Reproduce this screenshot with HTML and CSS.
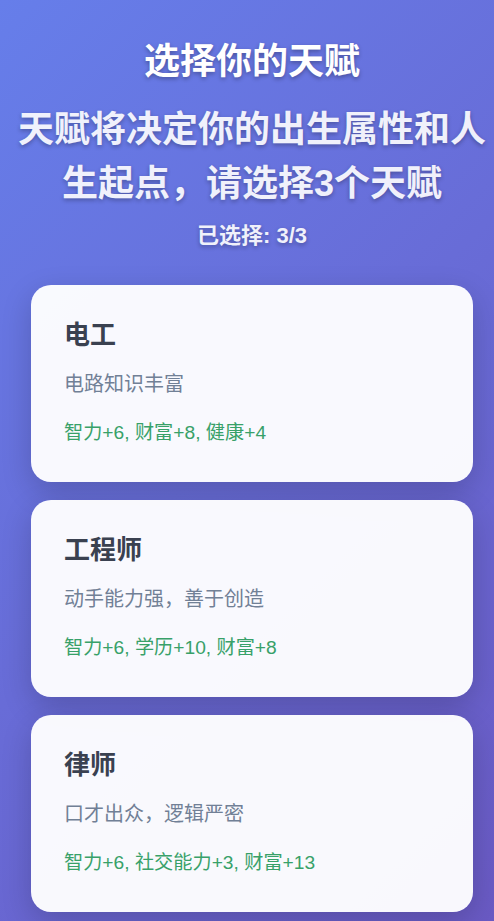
FILE: index.html
```html
<!DOCTYPE html>
<html lang="zh-CN">
  <head>
    <meta charset="utf-8">
    <title>选择你的天赋</title>
    <link rel="stylesheet" href="styles.css">
  </head>
  <body>

    <div class="header">
      <h1 class="title">选择你的天赋</h1>
      <p class="subtitle">天赋将决定你的出生属性和人生起点，请选择3个天赋</p>
      <div class="counter">已选择: 3/3</div>
    </div>

    <div class="talent-list">
      <div class="talent-card">
        <h3 class="talent-name">电工</h3>
        <p class="talent-desc">电路知识丰富</p>
        <p class="talent-effect">智力+6, 财富+8, 健康+4</p>
      </div>

      <div class="talent-card">
        <h3 class="talent-name">工程师</h3>
        <p class="talent-desc">动手能力强，善于创造</p>
        <p class="talent-effect">智力+6, 学历+10, 财富+8</p>
      </div>

      <div class="talent-card">
        <h3 class="talent-name">律师</h3>
        <p class="talent-desc">口才出众，逻辑严密</p>
        <p class="talent-effect">智力+6, 社交能力+3, 财富+13</p>
      </div>
    </div>

  </body>
</html>
```

FILE: styles.css
```css
html, body {
  margin: 0;
  padding: 0;
  height: 100%;
}

body {
  font-family: "Liberation Sans", "Noto Sans CJK SC", sans-serif;
  background: linear-gradient(135deg, #667eea 0%, #6a5ac4 100%);
  overflow: hidden;
}

/* header */
.header {
  padding: 40px 0 0 10px;
  text-align: center;
  color: #fff;
  text-shadow: 0 2px 4px rgba(0, 0, 0, 0.3);
}

.title {
  margin: 0;
  font-size: 36px;
  line-height: 44px;
  font-weight: bold;
}

.subtitle {
  margin: 19px 0 0;
  font-size: 36px;
  line-height: 54px;
  font-weight: bold;
  opacity: 0.9;
}

.counter {
  margin-top: 10px;
  font-size: 22px;
  line-height: 30px;
  font-weight: bold;
  opacity: 0.9;
}

/* cards */
.talent-list {
  display: flex;
  flex-direction: column;
  gap: 18px;
  padding: 34px 21px 0 31px;
}

.talent-card {
  background: rgba(255, 255, 255, 0.96);
  border-radius: 20px;
  padding: 34px 33px 35px;
  box-shadow: 0 10px 30px rgba(0, 0, 0, 0.18);
}

.talent-name {
  margin: 0;
  font-size: 26px;
  line-height: 32px;
  font-weight: bold;
  color: #3a4150;
}

.talent-desc {
  margin: 18px 0 0;
  font-size: 20px;
  line-height: 30px;
  color: #718096;
}

.talent-effect {
  margin: 20px 0 0;
  font-size: 19.2px;
  line-height: 28px;
  color: #38a169;
}
```
